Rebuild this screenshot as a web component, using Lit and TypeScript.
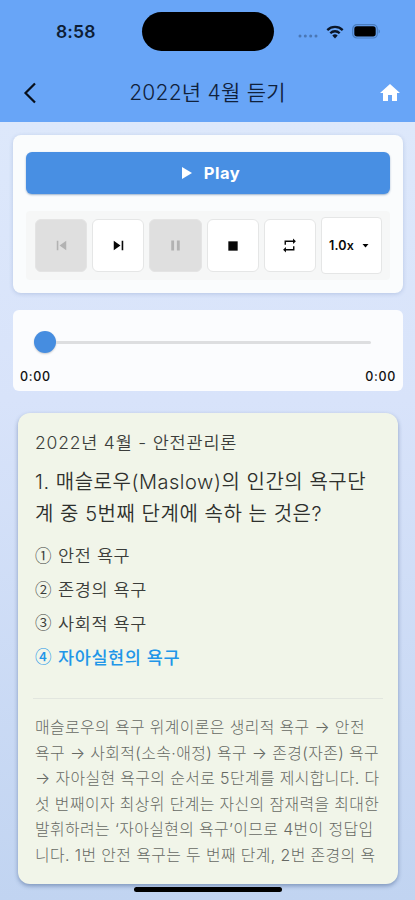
import { LitElement, html, css, svg } from "lit";
import { customElement } from "lit/decorators.js";

const QUESTION = ["1. 매슬로우(Maslow)의 인간의 욕구단", "계 중 5번째 단계에 속하 는 것은?"];
const CHOICES = [
  { mark: "①", text: "안전 욕구", correct: false },
  { mark: "②", text: "존경의 욕구", correct: false },
  { mark: "③", text: "사회적 욕구", correct: false },
  { mark: "④", text: "자아실현의 욕구", correct: true },
];
const EXPLANATION = [
  "매슬로우의 욕구 위계이론은 생리적 욕구 → 안전",
  "욕구 → 사회적(소속·애정) 욕구 → 존경(자존) 욕구",
  "→ 자아실현 욕구의 순서로 5단계를 제시합니다. 다",
  "섯 번째이자 최상위 단계는 자신의 잠재력을 최대한",
  "발휘하려는 ‘자아실현의 욕구’이므로 4번이 정답입",
  "니다. 1번 안전 욕구는 두 번째 단계, 2번 존경의 욕",
];

const icon = (paths: unknown, size = 16) =>
  html`<svg width=${size} height=${size} viewBox="0 0 24 24" fill="currentColor">${paths}</svg>`;
const prevIcon = svg`<path d="M6 6h2v12H6zm3.500 6l8.500 6V6z"/>`;
const nextIcon = svg`<path d="M6 18l8.500-6L6 6v12zM16 6v12h2V6h-2z"/>`;
const pauseIcon = svg`<path d="M6 19h4V5H6v14zm8-14v14h4V5h-4z"/>`;
const stopIcon = svg`<path d="M5 5h14v14H5z"/>`;
const repeatIcon = svg`<path d="M7 7h10v3l4-4-4-4v3H5v6h2V7zm10 10H7v-3l-4 4 4 4v-3h12v-6h-2v4z"/>`;

@customElement("status-bar")
class StatusBar extends LitElement {
  static styles = css`
    :host { display: block; height: 63px; }
    .bar { height: 63px; display: grid; grid-template-columns: 142px 132px 1fr; align-items: center; }
    .time { padding-left: 56px; font: 600 17.5px/20px Inter, sans-serif; letter-spacing: 0.15px; color: #0d1d35; }
    .island { height: 39px; border-radius: 20px; background: #000; }
    .signals { display: flex; align-items: center; padding-left: 23px; }
    svg { display: block; }
    .wifi { margin-left: 7px; }
    .battery { margin-left: 8px; }
  `;
  render() {
    return html`<div class="bar">
      <div class="time">8:58</div>
      <div class="island"></div>
      <div class="signals">
        <svg width="22" height="16" viewBox="0 0 22 16" fill="#4a77b5">
          <circle cx="3" cy="12" r="1.500" /><circle cx="8.300" cy="12" r="1.500" />
          <circle cx="13.700" cy="12" r="1.500" /><circle cx="19" cy="12" r="1.500" />
        </svg>
        <svg class="wifi" width="18" height="14" viewBox="0 0 18 14" fill="none" stroke="#0a1628" stroke-width="2.300">
          <path d="M1.300 5.100a11 11 0 0 1 15.400 0" /><path d="M4.300 8.200a6.700 6.700 0 0 1 9.400 0" />
          <path d="M9 13.400l-2.700-2.800a3.900 3.900 0 0 1 5.400 0z" fill="#0a1628" stroke="none" />
        </svg>
        <svg class="battery" width="29" height="15" viewBox="0 0 29 15">
          <rect x="0.700" y="0.700" width="24.600" height="13.300" rx="4.300" fill="none" stroke="#497dbf" stroke-width="1.200" />
          <rect x="2.300" y="2.300" width="21.400" height="10.100" rx="2.600" fill="#000" />
          <path d="M26.600 5.200v4.400c1.800-.8 1.800-3.600 0-4.400z" fill="#497dbf" />
        </svg>
      </div>
    </div>`;
  }
}

@customElement("player-panel")
class PlayerPanel extends LitElement {
  static styles = css`
    :host { display: block; }
    svg { display: block; }
    .card { box-sizing: border-box; height: 158px; padding: 17px 13px 12px; border-radius: 8px; background: #fafcfd; box-shadow: 0 1px 4px #3a5d9a38; }
    .play { box-sizing: border-box; padding-left: 6px; height: 42px; border-radius: 6px; background: #488fe3; box-shadow: 0 1px 2px #24528c70; display: flex; align-items: center; justify-content: center; gap: 12px; color: #fff; font: 700 16.5px/20px Inter, sans-serif; letter-spacing: 0.5px; }
    .tools { box-sizing: border-box; height: 69px; margin-top: 17px; padding: 6px 8px 6px 9px; background: #f6f7f7; border-radius: 4px; display: flex; align-items: center; gap: 5px; }
    .tool { box-sizing: border-box; flex: none; width: 52.2px; height: 53px; border-radius: 6px; border: 1px solid #e5e6e6; background: #fff; display: flex; align-items: center; justify-content: center; color: #080808; }
    .off { background: #dfdfdf; border-color: #e4e4e4; color: #b2b2b2; }
    .speed { width: 61px; height: 57px; border-radius: 4px; gap: 8px; font: 600 12.500px/16px Inter, sans-serif; letter-spacing: 0.2px; padding-right: 5px; }
  `;
  render() {
    return html`<div class="card">
      <div class="play">
        <svg width="10" height="12" viewBox="0 0 10 12"><path d="M0 0l10 6-10 6z" fill="#fff" /></svg>Play
      </div>
      <div class="tools">
        <div class="tool off">${icon(prevIcon, 19)}</div>
        <div class="tool">${icon(nextIcon, 19)}</div>
        <div class="tool off">${icon(pauseIcon, 17)}</div>
        <div class="tool">${icon(stopIcon)}</div>
        <div class="tool">${icon(repeatIcon, 17)}</div>
        <div class="tool speed">1.0x<svg width="7" height="4" viewBox="0 0 7 4"><path d="M0.500 0h6L3.500 3.500z" /></svg></div>
      </div>
    </div>`;
  }
}

@customElement("seek-panel")
class SeekPanel extends LitElement {
  static styles = css`
    :host { display: block; }
    .card { box-sizing: border-box; height: 81px; padding: 21px 7px 0; border-radius: 6px; background: #fbfcfe; }
    .slider { height: 22px; margin: 0 25px 0 14px; display: flex; align-items: center; }
    .thumb { flex: none; width: 22px; height: 22px; border-radius: 50%; background: #468de0; box-shadow: 0 1px 2px #0003; }
    .track { flex: 1; height: 3px; background: #dddee0; border-radius: 0 2px 2px 0; }
    .times { display: flex; justify-content: space-between; margin-top: 15px; font: 500 12.500px/17px Inter, sans-serif; letter-spacing: 0.7px; color: #111; }
  `;
  render() {
    return html`<div class="card">
      <div class="slider"><div class="thumb"></div><div class="track"></div></div>
      <div class="times"><span>0:00</span><span>0:00</span></div>
    </div>`;
  }
}

@customElement("question-card")
class QuestionCard extends LitElement {
  static styles = css`
    :host { display: block; }
    .card { box-sizing: border-box; height: 471px; padding: 18px 17px 0; border-radius: 12px; background: #f1f5e9; box-shadow: 0 2px 4px #29467a70; white-space: nowrap; font-family: Inter, "Noto Sans CJK KR", sans-serif; color: #3b3d3a; }
    .subject { font-size: 17.500px; line-height: 24px; letter-spacing: 0.8px; font-weight: 350; }
    .question { margin-top: 12px; font-size: 20px; line-height: 31.500px; letter-spacing: 0.53px; font-weight: 350; color: #2e302d; }
    .choices { margin-top: 8px; }
    .choice { display: flex; align-items: center; gap: 6px; height: 33.800px; font-size: 17.500px; letter-spacing: 0.6px; font-weight: 350; }
    .mark { width: 17px; font-family: "Noto Sans CJK KR", sans-serif; font-size: 16.500px; letter-spacing: 0; }
    .correct { color: #2196e8; font-weight: 500; }
    .rule { height: 1px; margin: 25px -2px 16px; background: #e2e6df; }
    .line { font-size: 15.900px; line-height: 25.500px; letter-spacing: 0.39px; font-weight: 300; color: #666964; }
  `;
  render() {
    return html`<div class="card">
      <div class="subject">2022년 4월 - 안전관리론</div>
      <div class="question">${QUESTION.map((l) => html`<div>${l}</div>`)}</div>
      <div class="choices">
        ${CHOICES.map((c) => html`<div class="choice ${c.correct ? "correct" : ""}"><span class="mark">${c.mark}</span><span>${c.text}</span></div>`)}
      </div>
      <div class="rule"></div>
      ${EXPLANATION.map((l) => html`<div class="line">${l}</div>`)}
    </div>`;
  }
}

@customElement("app-root")
class AppRoot extends LitElement {
  static styles = css`
    :host { display: block; width: 415px; height: 900px; overflow: hidden; }
    .screen { height: 900px; display: flex; flex-direction: column; background: linear-gradient(#dde8fb 122px, #d8e3fa 400px, #c1d4f1 900px); }
    .top { height: 122px; background: #68a5f7; }
    .nav { height: 59px; display: grid; grid-template-columns: 60px 1fr 60px; align-items: center; }
    .title { text-align: center; white-space: nowrap; font: 350 21px/30px Inter, "Noto Sans CJK KR", sans-serif; letter-spacing: 0.25px; color: #10213b; }
    .back { margin-left: 23px; }
    .home { margin-left: 23px; }
    svg { display: block; }
    .player { margin: 13px 12px 0 13px; }
    .seek { margin: 17px 12px 0 13px; }
    .question { margin: 22px 17px 0 18px; }
    .indicator { width: 148px; height: 5px; margin: 3px 0 0 134px; border-radius: 3px; background: #000; }
  `;
  render() {
    return html`<div class="screen">
      <div class="top">
        <status-bar></status-bar>
        <div class="nav">
          <svg class="back" width="14" height="22" viewBox="0 0 14 22" fill="none" stroke="#08101c" stroke-width="2.200"><path d="M12 1.500L2.500 11l9.500 9.500" /></svg>
          <div class="title">2022년 4월 듣기</div>
          <svg class="home" width="24" height="24" viewBox="0 0 24 24" fill="#fff"><path d="M10 20v-6h4v6h5v-8h3L12 3 2 12h3v8z" /></svg>
        </div>
      </div>
      <player-panel class="player"></player-panel>
      <seek-panel class="seek"></seek-panel>
      <question-card class="question"></question-card>
      <div class="indicator"></div>
    </div>`;
  }
}
